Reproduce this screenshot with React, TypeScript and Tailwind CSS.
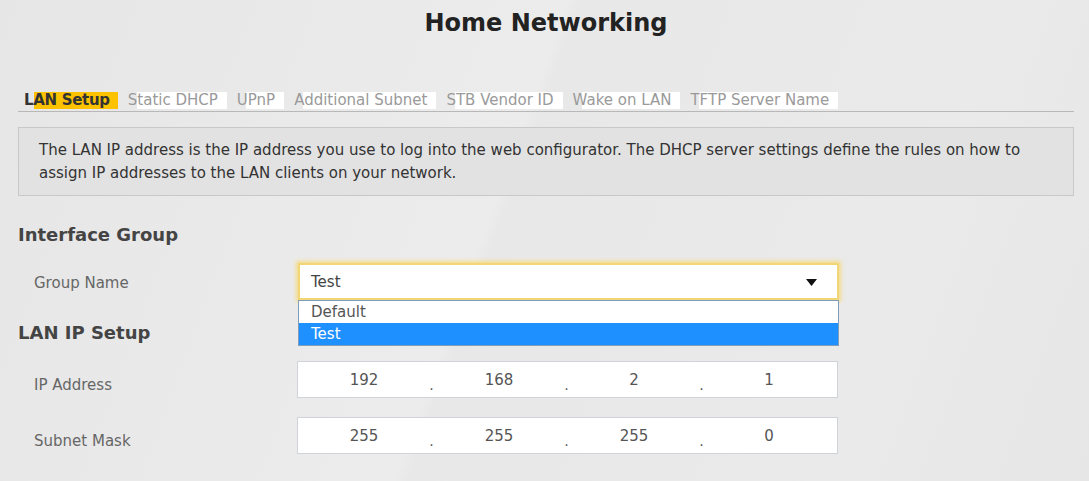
import React from "react";

const tabs = [
  "LAN Setup",
  "Static DHCP",
  "UPnP",
  "Additional Subnet",
  "STB Vendor ID",
  "Wake on LAN",
  "TFTP Server Name",
];

const IpBox = ({ parts }: { parts: string[] }) => (
  <div className="flex h-[37px] w-[541px] border border-[#d0d3d8] bg-white pt-[2px] text-[15px] text-[#555]">
    {parts.map((p, i) => (
      <React.Fragment key={i}>
        <div className="flex w-[132px] items-center justify-center">{p}</div>
        {i < parts.length - 1 && (
          <div className="flex w-[3px] items-end justify-center pb-[5px] text-[14px] leading-none">.</div>
        )}
      </React.Fragment>
    ))}
  </div>
);

export default function App() {
  return (
    <div
      className="min-h-screen w-full bg-[linear-gradient(110deg,#e6e6e6_0%,#ececec_45%,#e8e8e8_46%,#eaeaea_80%,#e6e6e6_100%)] pl-[18px] pr-[15px] text-[#444]"
      style={{ fontFamily: '"DejaVu Sans", sans-serif' }}
    >
      <h1 className="flex h-[45px] items-center justify-center text-[24px] font-bold text-[#222]">
        Home Networking
      </h1>

      <div className="mt-[47px] flex gap-[10px] border-b border-[#b8b8b8] pb-[2px] pl-[6px] text-[15px] leading-[17px]">
        {tabs.map((t, i) => (
          <div
            key={t}
            className={
              i === 0
                ? "bg-[linear-gradient(to_right,transparent_10px,#fcc200_10px)] pr-[8px] font-bold tracking-[-0.3px] text-[#333]"
                : "bg-[linear-gradient(to_right,transparent_9px,#ffffff_9px)] pr-[9px] text-[#9a9a9a]"
            }
          >
            {t}
          </div>
        ))}
      </div>

      <div className="mt-[15px] border border-[#c8c8c8] bg-[#e2e2e2] px-[20px] pb-[10px] pt-[11px] text-[15px] leading-[23px] text-[#333]">
        The LAN IP address is the IP address you use to log into the web configurator. The DHCP server settings define the rules on how to assign IP addresses to the LAN clients on your network.
      </div>

      <h2 className="mt-[27px] h-[24px] text-[18px] font-bold leading-[24px] text-[#444]">Interface Group</h2>

      <div className="mt-[16px] flex items-center">
        <div className="w-[280px] pl-[16px] pt-[3px] text-[15px] text-[#666]">Group Name</div>
        <div className="relative">
          <div className="flex h-[37px] w-[541px] items-center justify-between border-2 border-[#f2d574] bg-white pl-[11px] pr-[20px] pt-[2px] text-[15px] text-[#444] shadow-[0_0_4px_2px_#f5dc8c]">
            <span>Test</span>
            <svg width="11" height="7" viewBox="0 0 11 7">
              <path d="M0 0h11L5.5 7z" fill="#111" />
            </svg>
          </div>
          <div className="absolute left-0 top-[37px] z-10 w-[541px] border border-[#7f9db9] bg-white text-[15px] leading-[22px]">
            <div className="pl-[12px] text-[#555]">Default</div>
            <div className="bg-[#1e90ff] pl-[12px] text-white">Test</div>
          </div>
        </div>
      </div>

      <h2 className="mt-[21px] h-[24px] text-[18px] font-bold leading-[24px] text-[#444]">LAN IP Setup</h2>

      <div className="mt-[16px] flex items-center">
        <div className="w-[279px] pl-[16px] pt-[12px] text-[15px] text-[#666]">IP Address</div>
        <IpBox parts={["192", "168", "2", "1"]} />
      </div>

      <div className="mt-[19px] flex items-center">
        <div className="w-[279px] pl-[16px] pt-[12px] text-[15px] text-[#666]">Subnet Mask</div>
        <IpBox parts={["255", "255", "255", "0"]} />
      </div>
    </div>
  );
}
